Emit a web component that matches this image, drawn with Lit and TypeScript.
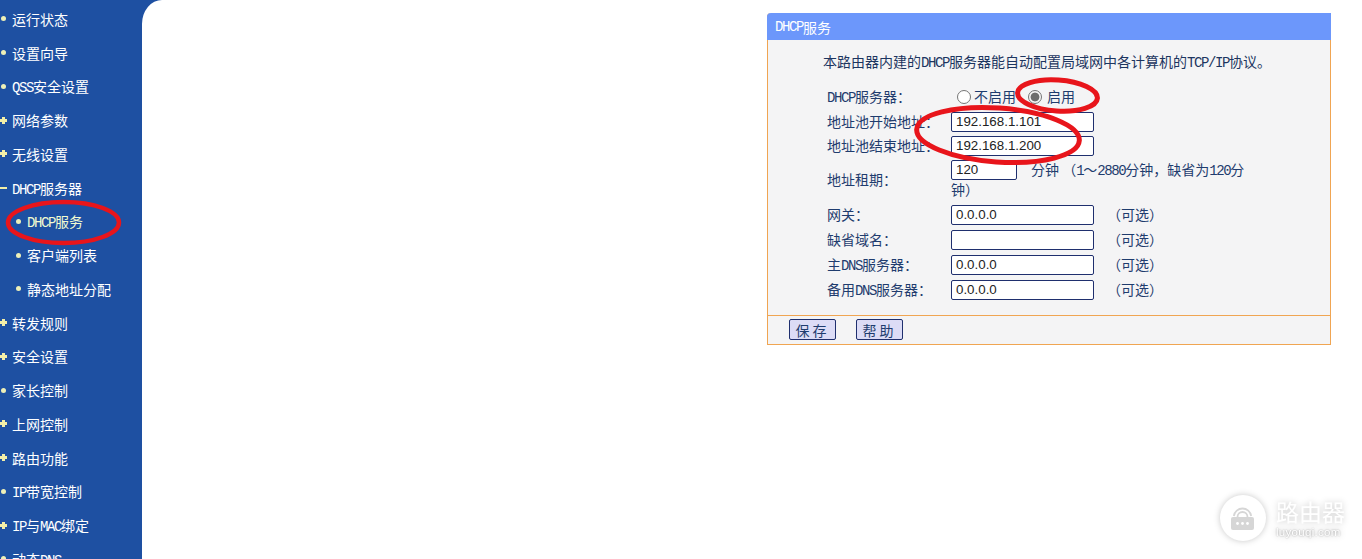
import { LitElement, html, css, svg } from "lit";
import { customElement } from "lit/decorators.js";

type Mark = "dot" | "plus" | "minus";
const MENU: { t: string; m: Mark; sub?: boolean; cur?: boolean }[] = [
  { t: "运行状态", m: "dot" },
  { t: "设置向导", m: "dot" },
  { t: "QSS安全设置", m: "dot" },
  { t: "网络参数", m: "plus" },
  { t: "无线设置", m: "plus" },
  { t: "DHCP服务器", m: "minus" },
  { t: "DHCP服务", m: "dot", sub: true, cur: true },
  { t: "客户端列表", m: "dot", sub: true },
  { t: "静态地址分配", m: "dot", sub: true },
  { t: "转发规则", m: "plus" },
  { t: "安全设置", m: "plus" },
  { t: "家长控制", m: "dot" },
  { t: "上网控制", m: "plus" },
  { t: "路由功能", m: "plus" },
  { t: "IP带宽控制", m: "dot" },
  { t: "IP与MAC绑定", m: "plus" },
  { t: "动态DNS", m: "dot" },
];

const mix = (s: string) =>
  s.split(/([\x21-\x7e]+)/).map((p, i) => (i % 2 ? html`<span class="l">${p}</span>` : p));

const mark = (m: Mark) => {
  if (m === "dot") return html`<i class="dot"></i>`;
  if (m === "minus") return html`<i class="minus"></i>`;
  return html`<i class="plus"></i>`;
};

@customElement("app-root")
export class AppRoot extends LitElement {
  static styles = css`
    :host {
      display: block;
      position: relative;
      width: 1362px;
      height: 559px;
      overflow: hidden;
      background: #fff;
      font-family: "Noto Sans CJK SC", "Liberation Sans", sans-serif;
      font-size: 14px;
    }
    .l {
      font-family: "Liberation Mono", monospace;
      font-size: 14px;
      letter-spacing: -1.4px;
      line-height: 0;
    }
    .page {
      display: flex;
      height: 559px;
      background: #1e50a2;
    }
    .side {
      width: 142px;
      flex: none;
      padding-top: 2px;
      color: #fff;
    }
    .item {
      display: flex;
      align-items: center;
      height: 33.75px;
      white-space: nowrap;
      line-height: 1;
    }
    .item.sub {
      padding-left: 15px;
    }
    .item.cur {
      color: #f2fbd0;
    }
    .mk {
      width: 12px;
      display: flex;
      flex: none;
      box-sizing: border-box;
    }
    .dot {
      width: 5px;
      height: 5px;
      border-radius: 50%;
      background: #eef0b8;
      margin-left: 1px;
    }
    .plus {
      width: 7px;
      height: 7px;
      background:
        linear-gradient(#f2eea8, #f2eea8) center / 7px 3px no-repeat,
        linear-gradient(#f2eea8, #f2eea8) center / 3px 7px no-repeat;
    }
    .minus {
      width: 7px;
      height: 2px;
      background: #f2eea8;
    }
    .main {
      flex: 1;
      background: #fff;
      border-top-left-radius: 20px 24px;
      padding: 13px 0 0 625px;
    }
    .panel {
      width: 564px;
      height: 332px;
      box-sizing: border-box;
      border: 1px solid #f0a552;
      border-top: 0;
      background: #f4f4f5;
      border-radius: 4px 0 0 0;
      display: flex;
      flex-direction: column;
      color: #1f3c6e;
    }
    .head {
      height: 27px;
      margin: 0 -1px;
      background: #6c97fb;
      color: #fff;
      display: flex;
      align-items: center;
      padding-left: 8px;
      border-radius: 4px 0 0 0;
      line-height: 1;
    }
    .intro {
      margin: 12px 0 0 55px;
      height: 20px;
      line-height: 18px;
      white-space: nowrap;
      color: #1c3560;
    }
    .form {
      flex: 1;
      margin: 15px 0 0 59px;
      display: flex;
      flex-direction: column;
    }
    .row {
      display: grid;
      grid-template-columns: 124px 320px;
      align-items: center;
      min-height: 20px;
      line-height: 20px;
      margin-bottom: 5px;
    }
    .row.tight {
      margin-bottom: 4px;
    }
    .radio-row {
      height: 20px;
      margin-bottom: 5px;
    }
    .lab {
      margin: -1px 0 1px;
    }
    .val {
      display: flex;
      align-items: center;
    }
    .opt {
      display: flex;
      align-items: center;
      white-space: nowrap;
      margin: -1px 0 1px;
    }
    input[type="radio"] {
      appearance: none;
      width: 14px;
      height: 14px;
      margin: 1px 3px 0 6px;
      border: 1px solid #757575;
      border-radius: 50%;
      background: #fff;
      box-sizing: border-box;
    }
    .opt + .opt input {
      margin-left: 12px;
      margin-right: 5px;
    }
    input[type="radio"]:checked {
      background: radial-gradient(circle, #6d6d6d 0 4px, #f4f4f4 4.8px);
    }
    input[type="text"] {
      box-sizing: border-box;
      width: 143px;
      height: 20px;
      border: 1px solid #1f2f6e;
      border-radius: 2px;
      background: #fff;
      padding: 0 4px 2px;
      margin: 0;
      font: 13.33px "Liberation Sans", sans-serif;
      color: #222;
      outline: none;
    }
    input.short {
      width: 66px;
      vertical-align: top;
      margin: 1px 0 -1px;
    }
    .hint {
      margin: -1px 0 1px 13px;
    }
    .lease {
      line-height: 20px;
      width: 300px;
      word-break: break-all;
      margin: -1px 0 1px;
    }
    .lease .unit {
      margin-left: 14px;
    }
    .foot {
      height: 29px;
      box-sizing: border-box;
      border-top: 1px solid #f0a552;
      display: flex;
      align-items: center;
      gap: 20px;
      padding: 0 0 1px 21px;
    }
    button {
      box-sizing: border-box;
      height: 21px;
      width: 47px;
      padding: 0;
      border: 1px solid #1f2f6e;
      border-radius: 2px;
      background: #dcdcf6;
      color: #1f3c6e;
      font: 14px "Noto Sans CJK SC", sans-serif;
      letter-spacing: 3px;
      line-height: 1;
    }
    .marks {
      position: absolute;
      inset: 0;
      pointer-events: none;
    }
    .wm {
      position: absolute;
      left: 1220px;
      top: 495px;
      display: flex;
      align-items: center;
      gap: 10px;
      color: #fff;
      filter: drop-shadow(0 0 3px rgba(0, 0, 0, 0.22));
    }
    .wm-c {
      width: 46px;
      height: 46px;
      border-radius: 50%;
      background: #fff;
      display: flex;
      align-items: center;
      justify-content: center;
    }
    .wm-t {
      display: flex;
      flex-direction: column;
      line-height: 1;
    }
    .wm-a {
      font-size: 23px;
      height: 28px;
      line-height: 28px;
      white-space: nowrap;
    }
    .wm-b {
      font: 11.5px "Liberation Sans", sans-serif;
      letter-spacing: 0.3px;
      line-height: 14px;
      text-shadow: 0 0 2px rgba(0, 0, 0, 0.4);
    }
  `;

  private field(label: string, value: string, opt = true, tight = false) {
    return html`<div class="row ${tight ? "tight" : ""}">
      <div class="lab">${mix(label)}</div>
      <div class="val">
        <input type="text" .value=${value} />
        ${opt ? html`<span class="hint">（可选）</span>` : ""}
      </div>
    </div>`;
  }

  render() {
    return html`
      <div class="page">
        <nav class="side">
          ${MENU.map(
            (i) => html`<div class="item ${i.sub ? "sub" : ""} ${i.cur ? "cur" : ""}">
              <span class="mk">${mark(i.m)}</span><span>${mix(i.t)}</span>
            </div>`
          )}
        </nav>
        <main class="main">
          <section class="panel">
            <div class="head">${mix("DHCP服务")}</div>
            <div class="intro">${mix("本路由器内建的DHCP服务器能自动配置局域网中各计算机的TCP/IP协议。")}</div>
            <div class="form">
              <div class="row radio-row">
                <div class="lab">${mix("DHCP服务器：")}</div>
                <div class="val">
                  <label class="opt"><input type="radio" name="d" />不启用</label>
                  <label class="opt"><input type="radio" name="d" checked />启用</label>
                </div>
              </div>
              ${this.field("地址池开始地址：", "192.168.1.101", false, true)}
              ${this.field("地址池结束地址：", "192.168.1.200", false, true)}
              <div class="row">
                <div class="lab">地址租期：</div>
                <div class="lease">
                  <input class="short" type="text" .value=${"120"} /><span class="unit"
                    >分钟</span
                  >
                  ${mix("（1～2880分钟，缺省为120分钟）")}
                </div>
              </div>
              ${this.field("网关：", "0.0.0.0")} ${this.field("缺省域名：", "")}
              ${this.field("主DNS服务器：", "0.0.0.0")} ${this.field("备用DNS服务器：", "0.0.0.0")}
            </div>
            <div class="foot">
              <button>保存</button>
              <button>帮助</button>
            </div>
          </section>
        </main>
      </div>
      <svg class="marks" width="1362" height="559" viewBox="0 0 1362 559" fill="none" stroke="#e8151b" stroke-width="5">
        ${svg`<ellipse cx="63.5" cy="222.5" rx="55.5" ry="20.5" stroke-width="4.5" />
        <ellipse cx="1057.5" cy="95.5" rx="40" ry="15.5" transform="rotate(4 1057.5 95.5)" />
        <ellipse cx="998" cy="135" rx="81.5" ry="27" transform="rotate(4 998 135)" />`}
      </svg>
      <div class="wm">
        <div class="wm-c">
          <svg width="30" height="30" viewBox="0 0 30 30" fill="none">
            <rect x="3" y="14" width="23" height="13" rx="2" fill="#d6d6d6" />
            <circle cx="9.5" cy="20.5" r="1.4" fill="#fff" />
            <circle cx="14.5" cy="20.5" r="1.4" fill="#fff" />
            <circle cx="19.5" cy="20.5" r="1.4" fill="#fff" />
            <path d="M9.5 14a5 5 0 0 1 10 0M5.8 13a8.8 8.8 0 0 1 17.4 0" stroke="#d6d6d6" stroke-width="1.8" />
          </svg>
        </div>
        <div class="wm-t">
          <div class="wm-a">路由器</div>
          <div class="wm-b">luyouqi.com</div>
        </div>
      </div>
    `;
  }
}
